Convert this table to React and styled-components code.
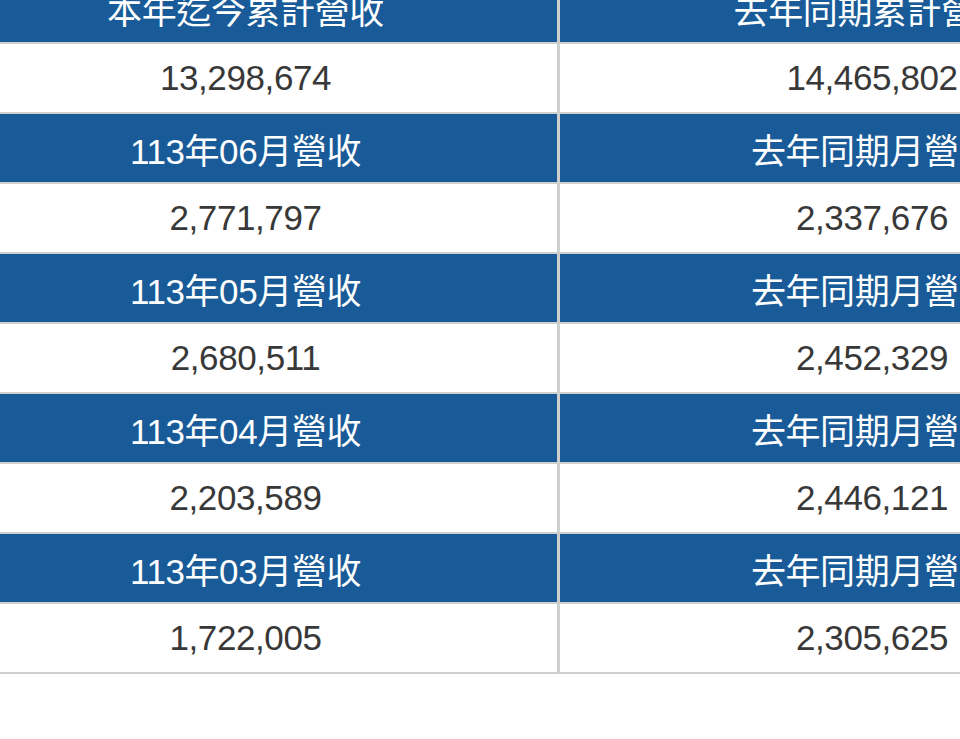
import React from 'react';
import styled, { createGlobalStyle } from 'styled-components';

const GlobalStyle = createGlobalStyle`
html, body {
    margin: 0;
    padding: 0;
    overflow: hidden;
    background: #ffffff;
}
`

const Viewport = styled.div`
width: 960px;
height: 739px;
overflow: hidden;
font-family: "Liberation Sans", Arial, "Noto Sans CJK TC", sans-serif;
`

const Grid = styled.div`
display: grid;
grid-template-columns: 626px 624px;
width: 1250px;
margin: -26px 0 0 -66px;
`

const Cell = styled.div`
height: 68px;
display: flex;
align-items: center;
justify-content: center;
font-size: 35px;
letter-spacing: -0.4px;
white-space: nowrap;
border-bottom: 2px solid #cfcfcf;
border-right: ${({ left }) => (left ? '3px solid #cfcfcf' : 'none')};
background: ${({ head }) => (head ? '#185b98' : '#ffffff')};
color: ${({ head }) => (head ? '#ffffff' : '#383838')};
`

const rows = [
    { a: '本年迄今累計營收', b: '去年同期累計營收', x: '13,298,674', y: '14,465,802' },
    { a: '113年06月營收', b: '去年同期月營收', x: '2,771,797', y: '2,337,676' },
    { a: '113年05月營收', b: '去年同期月營收', x: '2,680,511', y: '2,452,329' },
    { a: '113年04月營收', b: '去年同期月營收', x: '2,203,589', y: '2,446,121' },
    { a: '113年03月營收', b: '去年同期月營收', x: '1,722,005', y: '2,305,625' },
];

export default function App() {
    return (
        <Viewport>
            <GlobalStyle />
            <Grid>
                {rows.map((r, i) => (
                    <React.Fragment key={i}>
                        <Cell head left>{r.a}</Cell>
                        <Cell head>{r.b}</Cell>
                        <Cell left>{r.x}</Cell>
                        <Cell>{r.y}</Cell>
                    </React.Fragment>
                ))}
            </Grid>
        </Viewport>
    )
}
